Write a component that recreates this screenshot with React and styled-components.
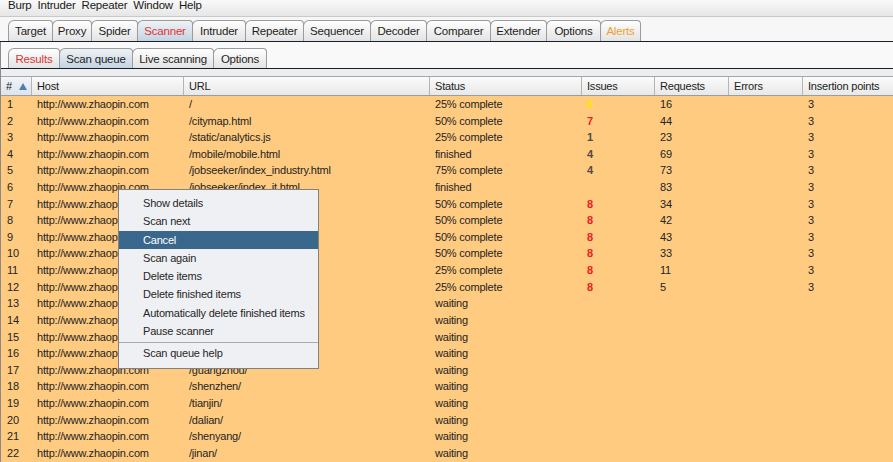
import React from "react";
import styled, { createGlobalStyle } from "styled-components";

const Global = createGlobalStyle`
  html, body { margin: 0; padding: 0; }
  body {
    background: #f3f3f3;
    font-family: "Liberation Sans", Arial, sans-serif;
    font-size: 11px;
    color: #222;
    overflow: hidden;
  }
`;

const Page = styled.div`
  width: 893px;
  height: 462px;
  display: flex;
  flex-direction: column;
  overflow: hidden;
  letter-spacing: -0.2px;
`;

const MenuBar = styled.div`
  height: 16px;
  display: flex;
  align-items: flex-start;
  gap: 6px;
  padding-left: 8px;
  background: linear-gradient(#f9f9f9, #e6e6e6);
  border-bottom: 1px solid #c9c9c9;
  line-height: 11px;
  font-size: 11.5px;
  color: #1a1a1a;
`;

const MenuItem = styled.span`
  padding: 0;
`;

const TabStrip = styled.div`
  display: flex;
  padding: ${(p) => (p.$sub ? "0 0 0 7px" : "3px 0 0 8px")};
  border-bottom: 1px solid #17212c;
  background: ${(p) => (p.$sub ? "transparent" : "#f7f7f7")};
`;

const Tab = styled.div`
  width: ${(p) => p.$w}px;
  height: ${(p) => (p.$sub ? 20 : 21)}px;
  box-sizing: border-box;
  display: flex;
  align-items: center;
  justify-content: center;
  border: 1px solid #9b9b9b;
  border-bottom: none;
  margin-right: -1px;
  border-radius: 6px 4px 0 0;
  background: ${(p) =>
    p.$active
      ? "linear-gradient(#eef2f6, #c3d3e1)"
      : "linear-gradient(#fefefe, #e3e3e3)"};
  color: ${(p) => p.$color || "#1e1e1e"};
  font-size: 11.5px;
  white-space: nowrap;
`;

const Panel = styled.div`
  flex: 1;
  display: flex;
  flex-direction: column;
  border-left: 1px solid #8a8a8a;
  padding-top: 6px;
  background: #f9f9f9;
  min-height: 0;
`;

const Gap = styled.div`
  height: 7px;
  background: #eceef0;
  border-bottom: 1px solid #a7a7a7;
`;

const Table = styled.div`
  position: relative;
  flex: 1;
  background: #ffcb80;
  min-height: 0;
`;

const cols = "31px 152px 246px 152px 73px 74px 74px 1fr";

const HeaderRow = styled.div`
  display: grid;
  grid-template-columns: ${cols};
  height: 19px;
  box-sizing: border-box;
  border-bottom: 1px solid #9c9c9c;
  background: linear-gradient(#fbfbfb, #e8e8e8);
`;

const HeadCell = styled.div`
  display: flex;
  align-items: center;
  gap: 7px;
  padding-left: 5px;
  border-right: 1px solid #b5b5b5;
  background: ${(p) => (p.$sorted ? "linear-gradient(#f2f5f9, #dde4ec)" : "transparent")};
  color: #222;
  &:last-child { border-right: none; }
`;

const SortArrow = styled.svg`
  width: 8px;
  height: 7px;
`;

const Row = styled.div`
  display: grid;
  grid-template-columns: ${cols};
  height: 16.62px;
  line-height: 16.62px;
`;

const Cell = styled.div`
  padding-left: ${(p) => (p.$num ? 6 : 5)}px;
  white-space: nowrap;
  overflow: hidden;
  color: ${(p) => p.$color || "#242424"};
  font-weight: ${(p) => (p.$bold ? "bold" : "normal")};
`;

const Menu = styled.div`
  position: absolute;
  left: 117px;
  top: 112px;
  width: 201px;
  box-sizing: border-box;
  padding: 4px 0 5px;
  background: #eef0f3;
  border: 1px solid #7f8184;
  z-index: 2;
`;

const MenuEntry = styled.div`
  height: 18.3px;
  line-height: 18.3px;
  padding-left: 24px;
  background: ${(p) => (p.$hl ? "#3a688c" : "transparent")};
  color: ${(p) => (p.$hl ? "#ffffff" : "#262626")};
  white-space: nowrap;
`;

const Separator = styled.div`
  height: 1px;
  margin: 2px 0 1px;
  background: #a9abae;
`;

const mainTabs = [
  ["Target", 45],
  ["Proxy", 40],
  ["Spider", 47],
  ["Scanner", 56, true, "#e03232"],
  ["Intruder", 54],
  ["Repeater", 59],
  ["Sequencer", 68],
  ["Decoder", 57],
  ["Comparer", 65],
  ["Extender", 57],
  ["Options", 55],
  ["Alerts", 41, false, "#f0a030"],
];

const subTabs = [
  ["Results", 52, false, "#e03232"],
  ["Scan queue", 74, true],
  ["Live scanning", 82],
  ["Options", 54],
];

const host = "http://www.zhaopin.com";
const RED = "#ee2020";
const GRAY = "#4a4a4a";

const rows = [
  ["/", "25% complete", "6", "#ffe400", "16"],
  ["/citymap.html", "50% complete", "7", RED, "44"],
  ["/static/analytics.js", "25% complete", "1", GRAY, "23"],
  ["/mobile/mobile.html", "finished", "4", GRAY, "69"],
  ["/jobseeker/index_industry.html", "75% complete", "4", GRAY, "73"],
  ["/jobseeker/index_it.html", "finished", "", null, "83"],
  ["/xian/", "50% complete", "8", RED, "34"],
  ["/wuhan/", "50% complete", "8", RED, "42"],
  ["/nanjing/", "50% complete", "8", RED, "43"],
  ["/suzhou/", "50% complete", "8", RED, "33"],
  ["/xiamen/", "25% complete", "8", RED, "11"],
  ["/qingdao/", "25% complete", "8", RED, "5"],
  ["/beijing/", "waiting"],
  ["/shanghai/", "waiting"],
  ["/hangzhou/", "waiting"],
  ["/chengdu/", "waiting"],
  ["/guangzhou/", "waiting"],
  ["/shenzhen/", "waiting"],
  ["/tianjin/", "waiting"],
  ["/dalian/", "waiting"],
  ["/shenyang/", "waiting"],
  ["/jinan/", "waiting"],
];

const menuItems = [
  "Show details",
  "Scan next",
  "Cancel",
  "Scan again",
  "Delete items",
  "Delete finished items",
  "Automatically delete finished items",
  "Pause scanner",
];

export default function App() {
  return (
    <Page>
      <Global />
      <MenuBar>
        {["Burp", "Intruder", "Repeater", "Window", "Help"].map((m) => (
          <MenuItem key={m}>{m}</MenuItem>
        ))}
      </MenuBar>
      <TabStrip>
        {mainTabs.map(([t, w, a, c]) => (
          <Tab key={t} $w={w} $active={a} $color={c}>
            {t}
          </Tab>
        ))}
      </TabStrip>
      <Panel>
        <TabStrip $sub>
          {subTabs.map(([t, w, a, c]) => (
            <Tab key={t} $sub $w={w} $active={a} $color={c}>
              {t}
            </Tab>
          ))}
        </TabStrip>
        <Gap />
        <Table>
          <HeaderRow>
            <HeadCell $sorted>
              #
              <SortArrow viewBox="0 0 8 7">
                <path d="M4 0 L8 7 L0 7 Z" fill="#4f7fae" />
              </SortArrow>
            </HeadCell>
            <HeadCell>Host</HeadCell>
            <HeadCell>URL</HeadCell>
            <HeadCell>Status</HeadCell>
            <HeadCell>Issues</HeadCell>
            <HeadCell>Requests</HeadCell>
            <HeadCell>Errors</HeadCell>
            <HeadCell>Insertion points</HeadCell>
          </HeaderRow>
          {rows.map(([url, status, issues, ic, req], i) => (
            <Row key={i}>
              <Cell $num>{i + 1}</Cell>
              <Cell>{host}</Cell>
              <Cell>{url}</Cell>
              <Cell>{status}</Cell>
              <Cell $bold $color={ic}>{issues || ""}</Cell>
              <Cell>{req || ""}</Cell>
              <Cell />
              <Cell>{req ? "3" : ""}</Cell>
            </Row>
          ))}
          <Menu>
            {menuItems.map((m) => (
              <MenuEntry key={m} $hl={m === "Cancel"}>
                {m}
              </MenuEntry>
            ))}
            <Separator />
            <MenuEntry>Scan queue help</MenuEntry>
          </Menu>
        </Table>
      </Panel>
    </Page>
  );
}
